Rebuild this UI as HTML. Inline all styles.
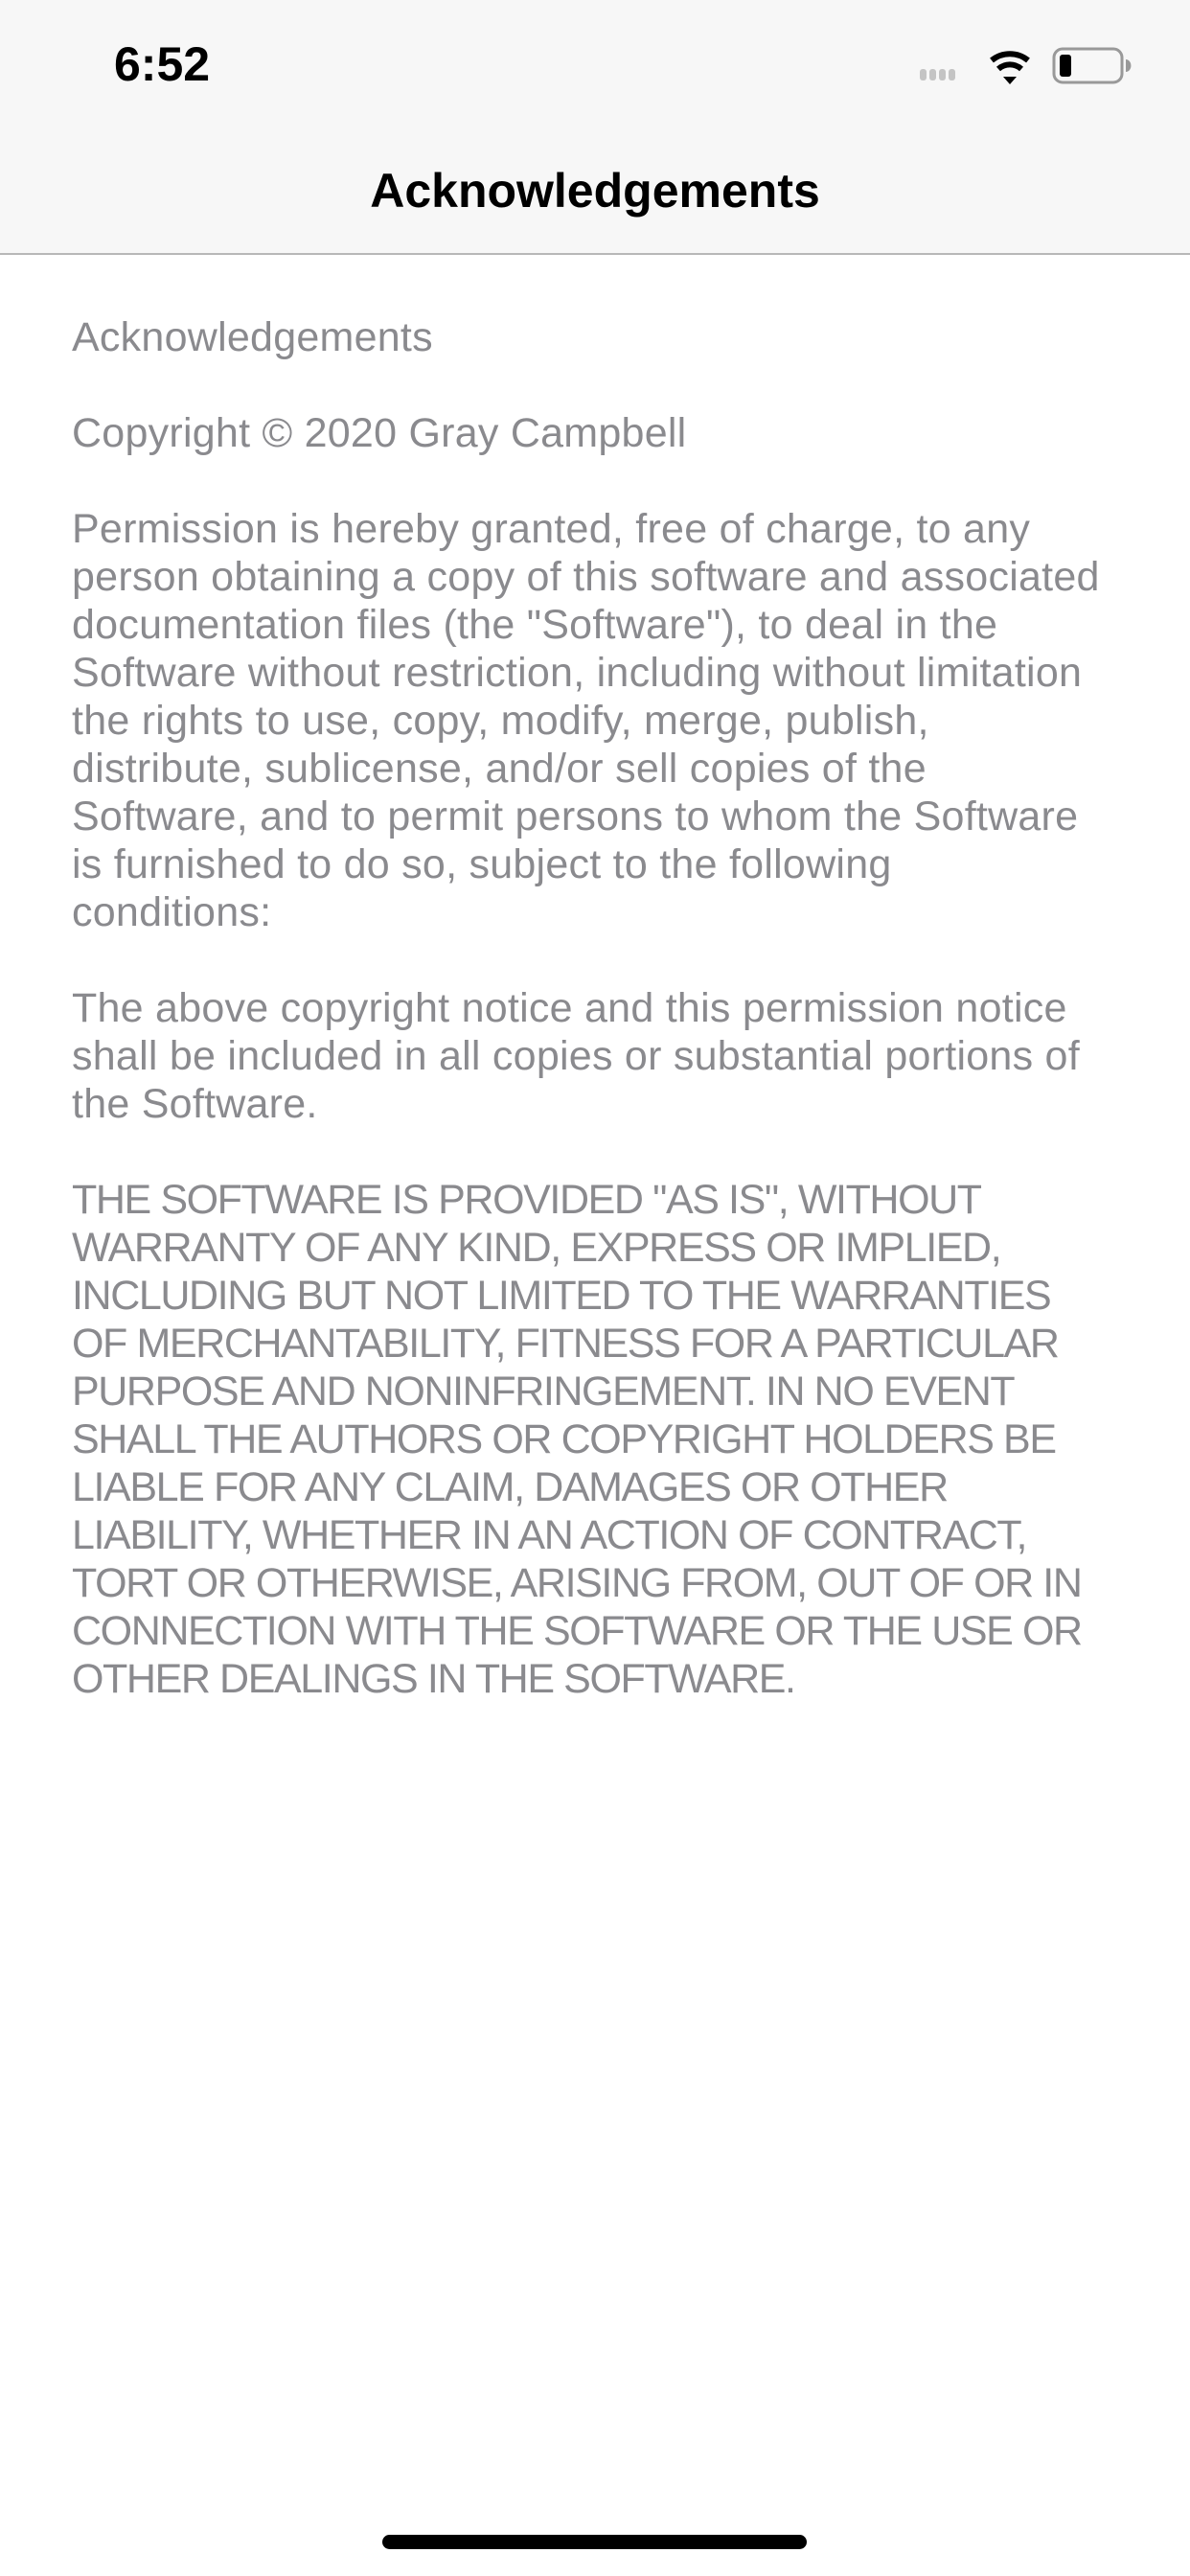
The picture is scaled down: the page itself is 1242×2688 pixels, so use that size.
<!DOCTYPE html>
<html><head><meta charset="utf-8"><style>
html,body{margin:0;padding:0;}
body{width:1242px;height:2688px;background:#fff;position:relative;overflow:hidden;font-family:"Liberation Sans",Arial,sans-serif;}
.nav{position:absolute;left:0;top:0;width:1242px;height:264px;background:#f7f7f7;border-bottom:2px solid #b8b8b8;}
.time{position:absolute;left:119px;top:38px;font-size:50px;font-weight:bold;color:#000;}
.title{position:absolute;left:0;width:1242px;top:170px;text-align:center;font-size:50px;font-weight:bold;color:#000;}
.txt{position:absolute;left:75px;top:327px;font-size:43px;line-height:50px;color:#8a8a8e;white-space:pre;letter-spacing:0.25px;}
.up{letter-spacing:-1.4px;}
.home{position:absolute;left:399px;top:2645px;width:443px;height:15px;border-radius:8px;background:#000;}
</style></head><body>
<div class="nav">
<div class="time">6:52</div>
<svg style="position:absolute;left:955px;top:44px" width="230" height="50" viewBox="0 0 230 50">
<g fill="#c4c4c4"><rect x="5" y="28" width="7" height="12" rx="3"/><rect x="15" y="28" width="7" height="12" rx="3"/><rect x="25" y="28" width="7" height="12" rx="3"/><rect x="35" y="28" width="7" height="12" rx="3"/></g>
<g fill="none" stroke="#000" stroke-width="6"><path d="M80 19 A30 30 0 0 1 118 19"/><path d="M87 28 A18 18 0 0 1 111 28"/></g>
<path d="M92 36 L106 36 L99 44 Z" fill="#000"/>
<rect x="145" y="7" width="71" height="35" rx="9" fill="none" stroke="#999" stroke-width="3"/>
<rect x="151" y="13" width="12" height="23" rx="3" fill="#000"/>
<path d="M220 18 a5 6 0 0 1 0 13 Z" fill="#999"/>
</svg>
<div class="title">Acknowledgements</div>
</div>
<div class="txt">Acknowledgements

Copyright © 2020 Gray Campbell

Permission is hereby granted, free of charge, to any
person obtaining a copy of this software and associated
documentation files (the "Software"), to deal in the
Software without restriction, including without limitation
the rights to use, copy, modify, merge, publish,
distribute, sublicense, and/or sell copies of the
Software, and to permit persons to whom the Software
is furnished to do so, subject to the following
conditions:

The above copyright notice and this permission notice
shall be included in all copies or substantial portions of
the Software.

<span class="up">THE SOFTWARE IS PROVIDED "AS IS", WITHOUT
WARRANTY OF ANY KIND, EXPRESS OR IMPLIED,
INCLUDING BUT NOT LIMITED TO THE WARRANTIES
OF MERCHANTABILITY, FITNESS FOR A PARTICULAR
PURPOSE AND NONINFRINGEMENT. IN NO EVENT
SHALL THE AUTHORS OR COPYRIGHT HOLDERS BE
LIABLE FOR ANY CLAIM, DAMAGES OR OTHER
LIABILITY, WHETHER IN AN ACTION OF CONTRACT,
TORT OR OTHERWISE, ARISING FROM, OUT OF OR IN
CONNECTION WITH THE SOFTWARE OR THE USE OR
OTHER DEALINGS IN THE SOFTWARE.</span></div>
<div class="home"></div>
</body></html>
